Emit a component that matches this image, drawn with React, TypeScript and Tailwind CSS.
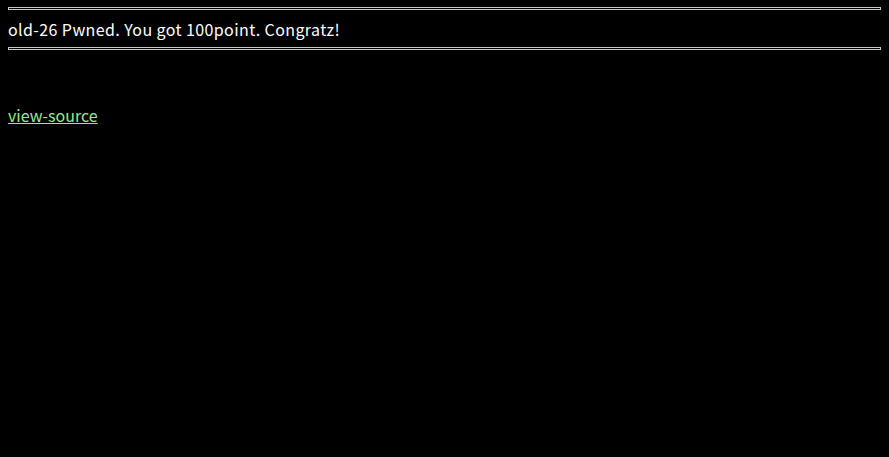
export default function App() {
  return (
    <div className="min-h-[457px] w-full bg-black px-2 pt-[7px] text-white" style={{ fontFamily: '"Noto Sans CJK KR", "Noto Sans", sans-serif' }}>
      <div className="h-[3px] border border-[#c8c8c8]" />
      <div className="mt-[9px] mb-[7px] text-[16px] leading-[21px] tracking-[0.4px]">old-26 Pwned. You got 100point. Congratz!</div>
      <div className="h-[3px] border border-[#c8c8c8]" />
      <div className="mt-[55px] text-[16px] leading-[21px]">
        <a href="#" className="text-[#90ee90] underline">view-source</a>
      </div>
    </div>
  );
}
